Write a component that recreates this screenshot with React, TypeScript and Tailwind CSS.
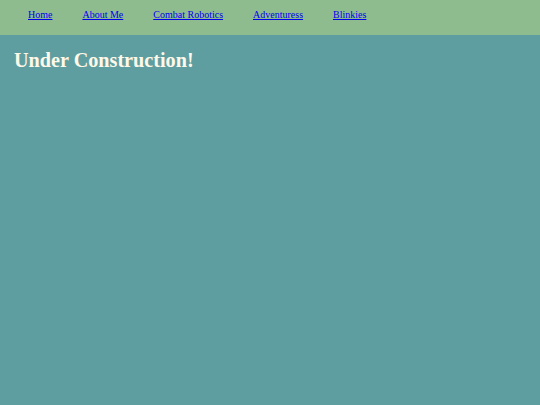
export default function App() {
  const links = ['Home', 'About Me', 'Combat Robotics', 'Adventuress', 'Blinkies']
  return (
    <div className="min-h-[405px] bg-[#5f9ea0] font-['Liberation_Serif',serif]">
      <nav className="flex h-[35px] items-center gap-[30px] bg-[#8fbc8f] pb-[6px] pl-[28px]">
        {links.map((l) => (
          <a key={l} href="#" className="text-[10px] text-[#0000ee] underline">
            {l}
          </a>
        ))}
      </nav>
      <h1 className="mt-[13px] pl-[14px] text-[20.2px] font-bold leading-[24px] text-[#fdf8e8]">
        Under Construction!
      </h1>
    </div>
  )
}
